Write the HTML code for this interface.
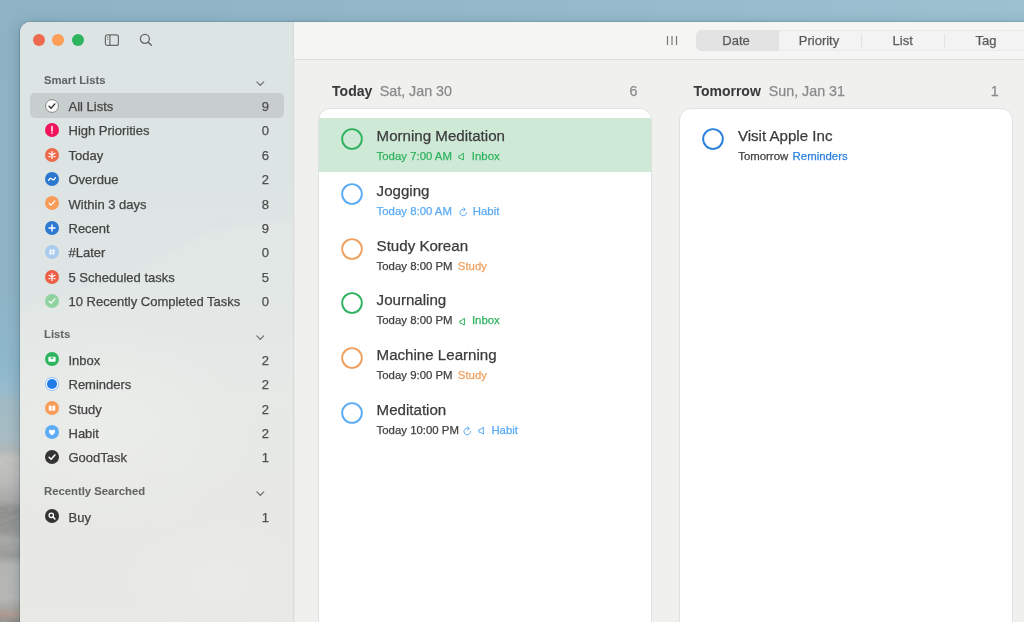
<!DOCTYPE html>
<html><head><meta charset="utf-8">
<style>
*{margin:0;padding:0;box-sizing:border-box}
html,body{width:1024px;height:622px;overflow:hidden}
body{font-family:"Liberation Sans",sans-serif;position:relative;
background:linear-gradient(90deg,#8db3c5 0%,#94b9ca 50%,#9cc1d1 100%);}
#desk-left{position:absolute;left:0;top:22px;width:22px;height:600px;
background:linear-gradient(180deg,#8db3c5 0.0%,#8eb4c6 44.7%,#8fb8cc 58.0%,#97bccd 61.3%,#a2bbc4 63.8%,#a8bcc3 69.7%,#b0b9ba 71.3%,#c3c3c0 72.7%,#bdbebb 76.3%,#a9aaa8 79.7%,#8f908e 81.3%,#949593 84.7%,#a8a9a7 86.3%,#9a9b99 88.8%,#b5b6b4 90.5%,#b7b8b6 96.0%,#a8a6a2 97.7%,#b09a90 98.7%,#8e8e8c 100.0%);}
#win{position:absolute;left:20px;top:22px;width:1020px;height:620px;border-top-left-radius:10px;overflow:hidden;background:#f0f0ef;box-shadow:0 0 0 0.6px rgba(40,60,70,0.3),0 3px 14px rgba(20,50,70,0.28)}
#side{position:absolute;left:0;top:0;width:274px;height:600px;
background:radial-gradient(ellipse 150px 110px at 90px 410px,rgba(240,241,238,0.55),rgba(240,241,238,0) 100%),radial-gradient(ellipse 120px 80px at 200px 560px,rgba(236,236,232,0.5),rgba(236,236,232,0) 100%),linear-gradient(180deg,#dce4e4 0%,#dee5e4 45%,#e3e7e4 62%,#e5e6e1 80%,#e6e6e1 100%);}
#tb{position:absolute;left:274px;top:0;width:746px;height:38px;background:#f5f5f4;border-bottom:1px solid #dedede}
#sidebar-sep{position:absolute;left:273px;top:0;width:1px;height:600px;background:#d9dbda;box-shadow:0.5px 0 0.8px rgba(0,0,0,0.06)}
.t{position:absolute;white-space:nowrap;line-height:1;-webkit-text-stroke:0.25px currentColor}
#root{position:absolute;left:0;top:0;width:1024px;height:622px;will-change:transform}
.ic{position:absolute;overflow:visible}
.card{position:absolute;background:#fff;border:1px solid #e1e1e0;border-radius:12px;}
.sel{position:absolute;left:30px;top:93px;width:254px;height:24.5px;border-radius:5px;background:#c8cdcd}
.seg{position:absolute;top:30px;height:21px}
</style></head><body><div id="root">
<div id="desk-left"></div>
<svg style="position:absolute;left:0;top:436px" width="22" height="186" viewBox="0 0 22 186"><defs><filter id="rk" x="0" y="0" width="100%" height="100%"><feTurbulence type="fractalNoise" baseFrequency="0.12 0.35" numOctaves="3" seed="7"/><feColorMatrix type="matrix" values="0 0 0 0 0.45  0 0 0 0 0.45  0 0 0 0 0.44  0 0 0 -2.2 1.25"/></filter>
<linearGradient id="rkm" x1="0" y1="0" x2="0" y2="1"><stop offset="0" stop-color="#fff" stop-opacity="0"/><stop offset="0.1" stop-color="#fff" stop-opacity="1"/><stop offset="1" stop-color="#fff" stop-opacity="1"/></linearGradient><mask id="rkmask"><rect width="22" height="186" fill="url(#rkm)"/></mask></defs><rect width="22" height="186" filter="url(#rk)" mask="url(#rkmask)" opacity="0.35"/></svg>
<div id="win">
  <div id="side"></div>
  <svg style="position:absolute;left:0;top:0" width="274" height="600" viewBox="0 0 274 600"><defs><filter id="sb" x="-20%" y="-20%" width="140%" height="140%"><feGaussianBlur stdDeviation="6"/></filter></defs><path d="M-10 292 L60 268 L120 248 L188 210 L230 204 L284 196 L284 610 L-10 610 Z" fill="#eef0ed" opacity="0.28" filter="url(#sb)"/></svg>
  <div id="sidebar-sep"></div>
  <div id="tb"></div>
</div>
<div class="sel"></div>
<div style="position:absolute;left:33.0px;top:34.0px;width:12px;height:12px;border-radius:50%;background:#ee6a4e"></div>
<div style="position:absolute;left:52.2px;top:34.0px;width:12px;height:12px;border-radius:50%;background:#fd9d56"></div>
<div style="position:absolute;left:71.9px;top:34.0px;width:12px;height:12px;border-radius:50%;background:#2eb35f"></div>
<svg class="ic" style="left:104px;top:33px" width="17" height="14" viewBox="0 0 17 14"><rect x="1.4" y="1.9" width="13.0" height="10.5" rx="2" stroke="#6a6a6a" stroke-width="1.2" fill="none"/><path d="M5.9 1.9 V12.4" stroke="#6a6a6a" stroke-width="1.2"/><path d="M3.0 4.3 H4.2 M3.0 6.3 H4.2" stroke="#6a6a6a" stroke-width="0.9"/></svg>
<svg class="ic" style="left:138px;top:32px" width="16" height="16" viewBox="0 0 16 16"><circle cx="6.9" cy="6.8" r="4.5" stroke="#666" stroke-width="1.3" fill="none"/><path d="M10.2 10.2 L13.3 13.3" stroke="#666" stroke-width="1.5" stroke-linecap="round"/></svg>
<div class="t" style="left:44.00px;top:75.13px;font-size:11.3px;color:#636565;font-weight:700;-webkit-text-stroke:0.05px currentColor;">Smart Lists</div>
<svg class="ic" style="left:256px;top:80.5px" width="9" height="6" viewBox="0 0 9 6"><path d="M0.9 0.9 L4.3 4.4 L7.7 0.9" stroke="#707272" stroke-width="1.35" fill="none" stroke-linecap="round" stroke-linejoin="round"/></svg>
<svg class="ic" style="left:45.30px;top:98.60px" width="14" height="14" viewBox="0 0 14 14"><circle cx="7" cy="7" r="6.4" fill="#fbfbfb" stroke="#858585" stroke-width="1"/><path d="M4.1 7.3 L6.1 9.2 L9.9 4.9" stroke="#2e2e2e" stroke-width="1.4" fill="none" stroke-linecap="round" stroke-linejoin="round"/></svg>
<div class="t" style="left:68.50px;top:99.70px;font-size:13px;color:#444444;font-weight:400;">All Lists</div>
<div class="t" style="right:755.00px;top:99.70px;font-size:13px;color:#4f4f4f;font-weight:400;">9</div>
<svg class="ic" style="left:45.30px;top:123.05px" width="14" height="14" viewBox="0 0 14 14"><circle cx="7" cy="7" r="7" fill="#f1145b"/><path d="M7 3.6 V7.9" stroke="#fff" stroke-width="1.5" stroke-linecap="round"/><circle cx="7" cy="10" r="0.85" fill="#fff"/></svg>
<div class="t" style="left:68.50px;top:124.15px;font-size:13px;color:#444444;font-weight:400;">High Priorities</div>
<div class="t" style="right:755.00px;top:124.15px;font-size:13px;color:#4f4f4f;font-weight:400;">0</div>
<svg class="ic" style="left:45.30px;top:147.50px" width="14" height="14" viewBox="0 0 14 14"><circle cx="7" cy="7" r="7" fill="#ec6a4b"/><path d="M7 3.6 V10.4 M4.05 5.3 L9.95 8.7 M4.05 8.7 L9.95 5.3" stroke="#fff" fill="none" stroke-linecap="round" stroke-linejoin="round" stroke-width="1.3"/></svg>
<div class="t" style="left:68.50px;top:148.60px;font-size:13px;color:#444444;font-weight:400;">Today</div>
<div class="t" style="right:755.00px;top:148.60px;font-size:13px;color:#4f4f4f;font-weight:400;">6</div>
<svg class="ic" style="left:45.30px;top:171.95px" width="14" height="14" viewBox="0 0 14 14"><circle cx="7" cy="7" r="7" fill="#2b78d1"/><path d="M3.6 8.4 C4.8 6.2 5.8 5.6 7 7.2 C8.2 8.6 9.2 7.8 10.4 5.6" stroke="#fff" fill="none" stroke-linecap="round" stroke-linejoin="round" stroke-width="1.3"/></svg>
<div class="t" style="left:68.50px;top:173.05px;font-size:13px;color:#444444;font-weight:400;">Overdue</div>
<div class="t" style="right:755.00px;top:173.05px;font-size:13px;color:#4f4f4f;font-weight:400;">2</div>
<svg class="ic" style="left:45.30px;top:196.40px" width="14" height="14" viewBox="0 0 14 14"><circle cx="7" cy="7" r="7" fill="#f89c58"/><path d="M4.1 7.3 L6.1 9.2 L9.9 4.9" stroke="#fff" stroke-width="1.2" fill="none" stroke-linecap="round" stroke-linejoin="round"/></svg>
<div class="t" style="left:68.50px;top:197.50px;font-size:13px;color:#444444;font-weight:400;">Within 3 days</div>
<div class="t" style="right:755.00px;top:197.50px;font-size:13px;color:#4f4f4f;font-weight:400;">8</div>
<svg class="ic" style="left:45.30px;top:220.85px" width="14" height="14" viewBox="0 0 14 14"><circle cx="7" cy="7" r="7" fill="#2e7ad3"/><path d="M7 4 V10 M4 7 H10" stroke="#fff" fill="none" stroke-linecap="round" stroke-linejoin="round" stroke-width="1.4"/></svg>
<div class="t" style="left:68.50px;top:221.95px;font-size:13px;color:#444444;font-weight:400;">Recent</div>
<div class="t" style="right:755.00px;top:221.95px;font-size:13px;color:#4f4f4f;font-weight:400;">9</div>
<svg class="ic" style="left:45.30px;top:245.30px" width="14" height="14" viewBox="0 0 14 14"><circle cx="7" cy="7" r="7" fill="#a9caee"/><path d="M6 4.2 L5.2 9.8 M8.8 4.2 L8 9.8 M4.3 5.9 H9.9 M4.1 8.1 H9.7" stroke="#fff" fill="none" stroke-linecap="round" stroke-linejoin="round" stroke-width="0.9"/></svg>
<div class="t" style="left:68.50px;top:246.40px;font-size:13px;color:#444444;font-weight:400;">#Later</div>
<div class="t" style="right:755.00px;top:246.40px;font-size:13px;color:#4f4f4f;font-weight:400;">0</div>
<svg class="ic" style="left:45.30px;top:269.75px" width="14" height="14" viewBox="0 0 14 14"><circle cx="7" cy="7" r="7" fill="#ec5e46"/><path d="M7 3.6 V10.4 M4.05 5.3 L9.95 8.7 M4.05 8.7 L9.95 5.3" stroke="#fff" fill="none" stroke-linecap="round" stroke-linejoin="round" stroke-width="1.3"/></svg>
<div class="t" style="left:68.50px;top:270.85px;font-size:13px;color:#444444;font-weight:400;">5 Scheduled tasks</div>
<div class="t" style="right:755.00px;top:270.85px;font-size:13px;color:#4f4f4f;font-weight:400;">5</div>
<svg class="ic" style="left:45.30px;top:294.20px" width="14" height="14" viewBox="0 0 14 14"><circle cx="7" cy="7" r="7" fill="#8fd3a1"/><path d="M4.1 7.3 L6.1 9.2 L9.9 4.9" stroke="#fff" stroke-width="1.2" fill="none" stroke-linecap="round" stroke-linejoin="round"/></svg>
<div class="t" style="left:68.50px;top:295.30px;font-size:13px;color:#444444;font-weight:400;">10 Recently Completed Tasks</div>
<div class="t" style="right:755.00px;top:295.30px;font-size:13px;color:#4f4f4f;font-weight:400;">0</div>
<div class="t" style="left:44.00px;top:329.43px;font-size:11.3px;color:#636565;font-weight:700;-webkit-text-stroke:0.05px currentColor;">Lists</div>
<svg class="ic" style="left:256px;top:335px" width="9" height="6" viewBox="0 0 9 6"><path d="M0.9 0.9 L4.3 4.4 L7.7 0.9" stroke="#707272" stroke-width="1.35" fill="none" stroke-linecap="round" stroke-linejoin="round"/></svg>
<svg class="ic" style="left:45.30px;top:352.10px" width="14" height="14" viewBox="0 0 14 14"><circle cx="7" cy="7" r="7" fill="#2db45f"/><rect x="3.4" y="4.7" width="7.2" height="5.0" rx="1" fill="#fff"/><path d="M4.9 5.6 H9.1 L7 7.5 Z" fill="#2db45f"/></svg>
<div class="t" style="left:68.50px;top:353.60px;font-size:13px;color:#444444;font-weight:400;">Inbox</div>
<div class="t" style="right:755.00px;top:353.60px;font-size:13px;color:#4f4f4f;font-weight:400;">2</div>
<svg class="ic" style="left:45.30px;top:376.55px" width="14" height="14" viewBox="0 0 14 14"><circle cx="7" cy="7" r="6.9" fill="#94c3f5"/><circle cx="7" cy="7" r="6.0" fill="#fff"/><circle cx="7" cy="7" r="5.0" fill="#1f7ce8"/></svg>
<div class="t" style="left:68.50px;top:378.05px;font-size:13px;color:#444444;font-weight:400;">Reminders</div>
<div class="t" style="right:755.00px;top:378.05px;font-size:13px;color:#4f4f4f;font-weight:400;">2</div>
<svg class="ic" style="left:45.30px;top:401.00px" width="14" height="14" viewBox="0 0 14 14"><circle cx="7" cy="7" r="7" fill="#f89d58"/><path d="M3.8 4.6 Q5.4 4.2 6.6 4.9 V10 Q5.4 9.3 3.8 9.7 Z M10.2 4.6 Q8.6 4.2 7.4 4.9 V10 Q8.6 9.3 10.2 9.7 Z" fill="#fff"/></svg>
<div class="t" style="left:68.50px;top:402.50px;font-size:13px;color:#444444;font-weight:400;">Study</div>
<div class="t" style="right:755.00px;top:402.50px;font-size:13px;color:#4f4f4f;font-weight:400;">2</div>
<svg class="ic" style="left:45.30px;top:425.45px" width="14" height="14" viewBox="0 0 14 14"><circle cx="7" cy="7" r="7" fill="#5dacf6"/><path d="M7 10.3 C5.2 9 3.9 7.9 3.9 6.2 C3.9 4.9 5.6 4.1 7 5.5 C8.4 4.1 10.1 4.9 10.1 6.2 C10.1 7.9 8.8 9 7 10.3 Z" fill="#fff"/></svg>
<div class="t" style="left:68.50px;top:426.95px;font-size:13px;color:#444444;font-weight:400;">Habit</div>
<div class="t" style="right:755.00px;top:426.95px;font-size:13px;color:#4f4f4f;font-weight:400;">2</div>
<svg class="ic" style="left:45.30px;top:449.90px" width="14" height="14" viewBox="0 0 14 14"><circle cx="7" cy="7" r="7" fill="#343434"/><path d="M4.1 7.3 L6.1 9.2 L9.9 4.9" stroke="#fff" stroke-width="1.5" fill="none" stroke-linecap="round" stroke-linejoin="round"/></svg>
<div class="t" style="left:68.50px;top:451.40px;font-size:13px;color:#444444;font-weight:400;">GoodTask</div>
<div class="t" style="right:755.00px;top:451.40px;font-size:13px;color:#4f4f4f;font-weight:400;">1</div>
<div class="t" style="left:44.00px;top:485.83px;font-size:11.3px;color:#636565;font-weight:700;-webkit-text-stroke:0.05px currentColor;">Recently Searched</div>
<svg class="ic" style="left:256px;top:491px" width="9" height="6" viewBox="0 0 9 6"><path d="M0.9 0.9 L4.3 4.4 L7.7 0.9" stroke="#707272" stroke-width="1.35" fill="none" stroke-linecap="round" stroke-linejoin="round"/></svg>
<svg class="ic" style="left:45.30px;top:509.20px" width="14" height="14" viewBox="0 0 14 14"><circle cx="7" cy="7" r="7" fill="#343434"/><circle cx="6.3" cy="6.3" r="2.2" stroke="#fff" stroke-width="1.3" fill="none"/><path d="M8 8 L9.9 9.9" stroke="#fff" fill="none" stroke-linecap="round" stroke-linejoin="round" stroke-width="1.5"/></svg>
<div class="t" style="left:68.50px;top:510.70px;font-size:13px;color:#444444;font-weight:400;">Buy</div>
<div class="t" style="right:755.00px;top:510.70px;font-size:13px;color:#4f4f4f;font-weight:400;">1</div>
<svg class="ic" style="left:665px;top:35px" width="14" height="11" viewBox="0 0 14 11"><path d="M2.5 1 V10 M7 1 V10 M11.5 1 V10" stroke="#7b7b7b" stroke-width="1.2"/></svg>
<div style="position:absolute;left:696px;top:30px;width:340px;height:21px;border-radius:6px;background:#f3f3f3;box-shadow:inset 0 0 0 1px #e9e9e9"></div>
<div style="position:absolute;left:696px;top:30px;width:82px;height:21px;border-radius:6px 0 0 6px;background:#e3e3e3;"></div>
<div style="position:absolute;left:777.5px;top:30px;width:1px;height:21px;background:#dedede"></div>
<div style="position:absolute;left:860.8px;top:33.5px;width:1px;height:14px;background:#e2e2e2"></div>
<div style="position:absolute;left:944px;top:33.5px;width:1px;height:14px;background:#e2e2e2"></div>
<div class="t" style="left:736.00px;top:33.60px;font-size:13px;color:#5a5a5a;font-weight:400;transform:translateX(-50%);">Date</div>
<div class="t" style="left:819.00px;top:33.60px;font-size:13px;color:#5a5a5a;font-weight:400;transform:translateX(-50%);">Priority</div>
<div class="t" style="left:902.70px;top:33.60px;font-size:13px;color:#5a5a5a;font-weight:400;transform:translateX(-50%);">List</div>
<div class="t" style="left:985.90px;top:33.60px;font-size:13px;color:#5a5a5a;font-weight:400;transform:translateX(-50%);">Tag</div>
<div class="t" style="left:332.10px;top:84.15px;font-size:14px;color:#3a3a3a;font-weight:700;-webkit-text-stroke:0.05px currentColor;">Today</div>
<div class="t" style="left:379.70px;top:83.90px;font-size:14.3px;color:#8a8a8a;font-weight:400;">Sat, Jan 30</div>
<div class="t" style="right:386.50px;top:83.90px;font-size:14.3px;color:#8a8a8a;font-weight:400;">6</div>
<div class="card" style="left:317.5px;top:107.5px;width:334.6px;height:540px"></div>
<div style="position:absolute;left:318.5px;top:117.70px;width:332.6px;height:54px;background:#cfe9d7"></div>
<svg class="ic" style="left:340.00px;top:127.20px" width="24" height="24" viewBox="0 0 24 24"><circle cx="12" cy="12" r="9.85" stroke="#2fb25e" stroke-width="1.9" fill="none"/></svg>
<div class="t" style="left:376.60px;top:128.32px;font-size:15.1px;color:#3b3b3b;font-weight:400;">Morning Meditation</div>
<div class="t" style="left:376.60px;top:150.55px;font-size:11.4px;color:#2fb25e;font-weight:400;">Today 7:00 AM</div>
<svg class="ic" style="left:458.30px;top:151.70px" width="8" height="10" viewBox="0 0 8 10"><path d="M5.4 1.2 L2.1 3.7 H0.9 V6.2 H2.1 L5.4 8.0 Z" stroke="#2fb25e" stroke-width="1.0" fill="none" stroke-linejoin="round"/></svg>
<div class="t" style="left:471.80px;top:150.55px;font-size:11.4px;color:#2fb25e;font-weight:400;">Inbox</div>
<svg class="ic" style="left:340.00px;top:181.90px" width="24" height="24" viewBox="0 0 24 24"><circle cx="12" cy="12" r="9.85" stroke="#5aabf5" stroke-width="1.9" fill="none"/></svg>
<div class="t" style="left:376.60px;top:183.02px;font-size:15.1px;color:#3b3b3b;font-weight:400;">Jogging</div>
<div class="t" style="left:376.60px;top:206.05px;font-size:11.4px;color:#5aabf5;font-weight:400;">Today 8:00 AM</div>
<svg class="ic" style="left:458.60px;top:206.70px" width="10" height="10" viewBox="0 0 10 10"><path d="M7.6 5.6 A3.3 3.3 0 1 1 5.6 2.4" stroke="#5aabf5" stroke-width="1" fill="none" stroke-linecap="round"/><path d="M4.6 0.9 L6.4 2.5 L4.7 4.0" stroke="#5aabf5" stroke-width="1" fill="none" stroke-linecap="round" stroke-linejoin="round"/></svg>
<div class="t" style="left:472.80px;top:206.05px;font-size:11.4px;color:#5aabf5;font-weight:400;">Habit</div>
<svg class="ic" style="left:340.00px;top:236.60px" width="24" height="24" viewBox="0 0 24 24"><circle cx="12" cy="12" r="9.85" stroke="#f0a05e" stroke-width="1.9" fill="none"/></svg>
<div class="t" style="left:376.60px;top:237.72px;font-size:15.1px;color:#3b3b3b;font-weight:400;">Study Korean</div>
<div class="t" style="left:376.60px;top:260.75px;font-size:11.4px;color:#404040;font-weight:400;">Today 8:00 PM</div>
<div class="t" style="left:457.80px;top:260.75px;font-size:11.4px;color:#f0a05e;font-weight:400;">Study</div>
<svg class="ic" style="left:340.00px;top:291.30px" width="24" height="24" viewBox="0 0 24 24"><circle cx="12" cy="12" r="9.85" stroke="#2fb25e" stroke-width="1.9" fill="none"/></svg>
<div class="t" style="left:376.60px;top:292.42px;font-size:15.1px;color:#3b3b3b;font-weight:400;">Journaling</div>
<div class="t" style="left:376.60px;top:315.45px;font-size:11.4px;color:#404040;font-weight:400;">Today 8:00 PM</div>
<svg class="ic" style="left:458.80px;top:316.60px" width="8" height="10" viewBox="0 0 8 10"><path d="M5.4 1.2 L2.1 3.7 H0.9 V6.2 H2.1 L5.4 8.0 Z" stroke="#2fb25e" stroke-width="1.0" fill="none" stroke-linejoin="round"/></svg>
<div class="t" style="left:471.90px;top:315.45px;font-size:11.4px;color:#2fb25e;font-weight:400;">Inbox</div>
<svg class="ic" style="left:340.00px;top:346.00px" width="24" height="24" viewBox="0 0 24 24"><circle cx="12" cy="12" r="9.85" stroke="#f0a05e" stroke-width="1.9" fill="none"/></svg>
<div class="t" style="left:376.60px;top:347.12px;font-size:15.1px;color:#3b3b3b;font-weight:400;">Machine Learning</div>
<div class="t" style="left:376.60px;top:370.15px;font-size:11.4px;color:#404040;font-weight:400;">Today 9:00 PM</div>
<div class="t" style="left:457.80px;top:370.15px;font-size:11.4px;color:#f0a05e;font-weight:400;">Study</div>
<svg class="ic" style="left:340.00px;top:400.70px" width="24" height="24" viewBox="0 0 24 24"><circle cx="12" cy="12" r="9.85" stroke="#5aabf5" stroke-width="1.9" fill="none"/></svg>
<div class="t" style="left:376.60px;top:401.82px;font-size:15.1px;color:#3b3b3b;font-weight:400;">Meditation</div>
<div class="t" style="left:376.60px;top:424.85px;font-size:11.4px;color:#404040;font-weight:400;">Today 10:00 PM</div>
<svg class="ic" style="left:463.00px;top:425.50px" width="10" height="10" viewBox="0 0 10 10"><path d="M7.6 5.6 A3.3 3.3 0 1 1 5.6 2.4" stroke="#5aabf5" stroke-width="1" fill="none" stroke-linecap="round"/><path d="M4.6 0.9 L6.4 2.5 L4.7 4.0" stroke="#5aabf5" stroke-width="1" fill="none" stroke-linecap="round" stroke-linejoin="round"/></svg>
<svg class="ic" style="left:477.70px;top:426.00px" width="8" height="10" viewBox="0 0 8 10"><path d="M5.4 1.2 L2.1 3.7 H0.9 V6.2 H2.1 L5.4 8.0 Z" stroke="#5aabf5" stroke-width="1.0" fill="none" stroke-linejoin="round"/></svg>
<div class="t" style="left:491.40px;top:424.85px;font-size:11.4px;color:#5aabf5;font-weight:400;">Habit</div>
<div class="t" style="left:693.40px;top:84.15px;font-size:14px;color:#3a3a3a;font-weight:700;-webkit-text-stroke:0.05px currentColor;">Tomorrow</div>
<div class="t" style="left:768.70px;top:83.90px;font-size:14.3px;color:#8a8a8a;font-weight:400;">Sun, Jan 31</div>
<div class="t" style="right:25.20px;top:83.90px;font-size:14.3px;color:#8a8a8a;font-weight:400;">1</div>
<div class="card" style="left:678.8px;top:107.5px;width:334.6px;height:540px"></div>
<svg class="ic" style="left:701.30px;top:127.20px" width="24" height="24" viewBox="0 0 24 24"><circle cx="12" cy="12" r="9.85" stroke="#2a7fdc" stroke-width="1.9" fill="none"/></svg>
<div class="t" style="left:737.90px;top:128.32px;font-size:15.1px;color:#3b3b3b;font-weight:400;">Visit Apple Inc</div>
<div class="t" style="left:738.20px;top:150.55px;font-size:11.4px;color:#404040;font-weight:400;">Tomorrow</div>
<div class="t" style="left:792.60px;top:150.55px;font-size:11.4px;color:#2a7fdc;font-weight:400;">Reminders</div>
</div></body></html>
